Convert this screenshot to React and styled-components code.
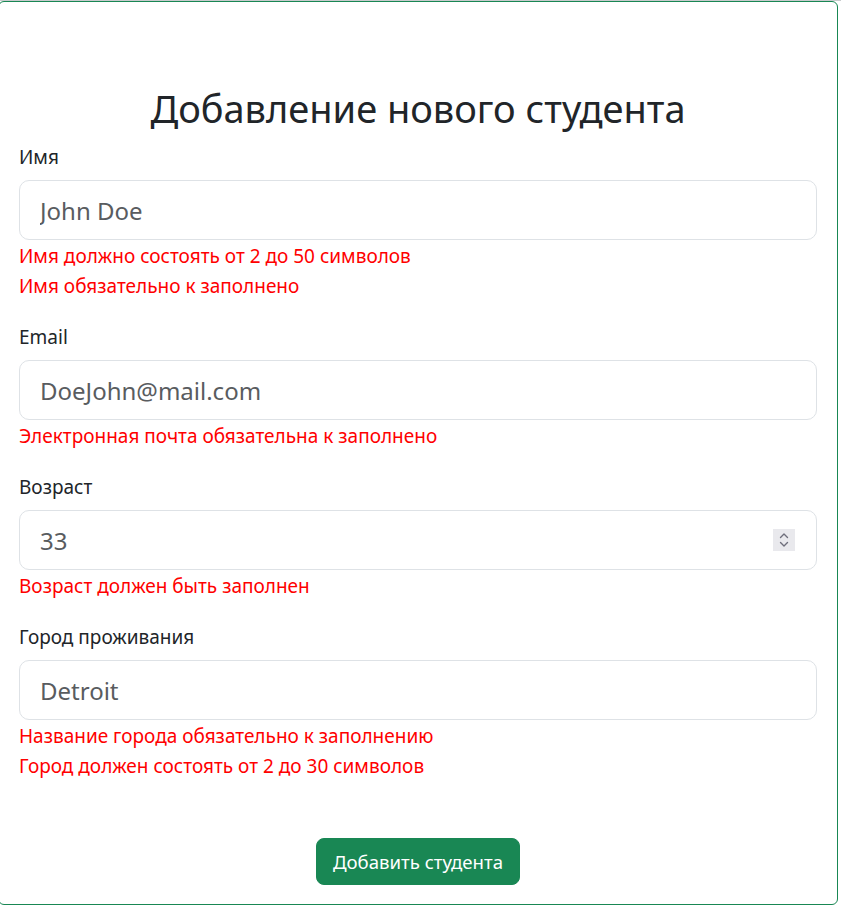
import React from 'react'
import styled, { createGlobalStyle } from 'styled-components'

const GlobalStyle = createGlobalStyle`
  body {
    margin: 0;
    background: #fff;
    font-family: 'Noto Sans', 'Open Sans', sans-serif;
    color: #212529;
  }
`

const Page = styled.div`
  width: 841px;
  border-top: 1px solid #c8cbcd;
  overflow: hidden;
`

const Card = styled.form`
  /* border */
  border: 1px solid #198754;
  border-radius: 6px;

  /* sizing */
  width: 840px;
  box-sizing: border-box;
  margin-left: -2px;
  padding: 0 20px 19px 20px;
  display: flex;
  flex-direction: column;
`

const Title = styled.h1`
  margin: 82px 0 10px;
  font-size: 38px;
  font-weight: 400;
  line-height: 48px;
  text-align: center;
  color: #212529;
`

const Group = styled.div`
  display: flex;
  flex-direction: column;
  margin-bottom: 21px;
`

const Label = styled.label`
  font-size: 19px;
  line-height: 30px;
  margin-bottom: 8px;
`

const InputWrap = styled.div`
  position: relative;
`

const Input = styled.input`
  width: 100%;
  height: 60px;
  box-sizing: border-box;
  padding: 0 20px;
  font-family: inherit;
  font-size: 24px;
  color: #212529;
  border: 1px solid #dee2e6;
  border-radius: 10px;
  background: #fff;
  outline: 0;

  &::placeholder {
    color: #595c5f;
  }
`

const Spinner = styled.div`
  position: absolute;
  right: 22px;
  top: 50%;
  transform: translateY(-50%);
  width: 22px;
  height: 22px;
  background: #e9e9ed;
  display: flex;
  align-items: center;
  justify-content: center;
`

const Errors = styled.div`
  display: flex;
  flex-direction: column;
  margin-top: 1px;
`

const Error = styled.div`
  font-size: 19px;
  line-height: 30px;
  color: #ff0000;
`

const Actions = styled.div`
  display: flex;
  justify-content: center;
  margin-top: 36px;
`

const Submit = styled.button`
  cursor: pointer;
  font-family: inherit;
  font-size: 18.6px;
  line-height: 29px;
  color: #fff;
  background-color: #198754;
  padding: 8px 16px;
  border: 1px solid #198754;
  border-radius: 8px;
`

const fields = [
  {
    label: 'Имя',
    placeholder: 'John Doe',
    errors: ['Имя должно состоять от 2 до 50 символов', 'Имя обязательно к заполнено'],
  },
  {
    label: 'Email',
    placeholder: 'DoeJohn@mail.com',
    errors: ['Электронная почта обязательна к заполнено'],
  },
  {
    label: 'Возраст',
    placeholder: '33',
    number: true,
    errors: ['Возраст должен быть заполнен'],
  },
  {
    label: 'Город проживания',
    placeholder: 'Detroit',
    errors: ['Название города обязательно к заполнению', 'Город должен состоять от 2 до 30 символов'],
  },
]

function SpinIcon() {
  return (
    <svg width="10" height="16" viewBox="0 0 10 16" fill="none" stroke="#6f6f7c" strokeWidth="1.4" strokeLinecap="round" strokeLinejoin="round">
      <path d="M1.5 5.5 L5 2 L8.5 5.5" />
      <path d="M1.5 10.5 L5 14 L8.5 10.5" />
    </svg>
  )
}

export default function App() {
  return (
    <Page>
      <GlobalStyle />
      <Card onSubmit={e => e.preventDefault()}>
        <Title>Добавление нового студента</Title>
        {fields.map(f => (
          <Group key={f.label}>
            <Label>{f.label}</Label>
            <InputWrap>
              <Input type="text" placeholder={f.placeholder} />
              {f.number && (
                <Spinner>
                  <SpinIcon />
                </Spinner>
              )}
            </InputWrap>
            <Errors>
              {f.errors.map(err => (
                <Error key={err}>{err}</Error>
              ))}
            </Errors>
          </Group>
        ))}
        <Actions>
          <Submit type="submit">Добавить студента</Submit>
        </Actions>
      </Card>
    </Page>
  )
}
